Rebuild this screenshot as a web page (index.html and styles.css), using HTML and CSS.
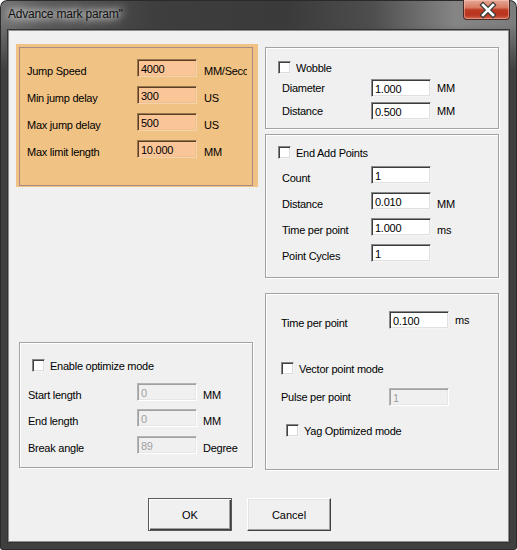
FILE: index.html
```html
<!DOCTYPE html>
<html>
<head>
  <title>Advance mark param</title>
  <link rel="stylesheet" href="styles.css">
</head>
<body>
  <div class="window">
    <div class="titlebar">
      <span class="title">Advance mark param"</span>
      <span class="close">
        <svg width="47" height="20" viewBox="0 0 47 20">
          <path d="M19 5 L29 15 M29 5 L19 15" stroke="#3a3a3a" stroke-width="5" stroke-linecap="square"/>
          <path d="M19 5 L29 15 M29 5 L19 15" stroke="#ffffff" stroke-width="2.6" stroke-linecap="square"/>
        </svg>
      </span>
    </div>

    <div class="client">
      <div class="columns">
        <div class="col-left">
          <div class="orange-panel">
            <div class="group group-orange">
              <div class="row">
                <span class="label shift">Jump Speed</span>
                <input class="field field-orange" type="text" value="4000">
                <span class="unit shift unit-clip">MM/Second</span>
              </div>
              <div class="row">
                <span class="label shift">Min jump delay</span>
                <input class="field field-orange" type="text" value="300">
                <span class="unit shift">US</span>
              </div>
              <div class="row">
                <span class="label shift">Max jump delay</span>
                <input class="field field-orange" type="text" value="500">
                <span class="unit shift">US</span>
              </div>
              <div class="row">
                <span class="label shift">Max limit length</span>
                <input class="field field-orange" type="text" value="10.000">
                <span class="unit shift">MM</span>
              </div>
            </div>
          </div>

          <div class="group group-optimize">
            <label class="check-row"><input type="checkbox" class="check"> Enable optimize mode</label>
            <div class="row">
              <span class="label shift">Start length</span>
              <input class="field" type="text" value="0" disabled>
              <span class="unit shift">MM</span>
            </div>
            <div class="row">
              <span class="label shift">End length</span>
              <input class="field" type="text" value="0" disabled>
              <span class="unit shift">MM</span>
            </div>
            <div class="row row-last">
              <span class="label shift">Break angle</span>
              <input class="field" type="text" value="89" disabled>
              <span class="unit shift">Degree</span>
            </div>
          </div>
        </div>

        <div class="col-right">
          <div class="group group-wobble">
            <label class="check-row"><input type="checkbox" class="check"> Wobble</label>
            <div class="row">
              <span class="label">Diameter</span>
              <input class="field" type="text" value="1.000">
              <span class="unit">MM</span>
            </div>
            <div class="row">
              <span class="label">Distance</span>
              <input class="field" type="text" value="0.500">
              <span class="unit">MM</span>
            </div>
          </div>

          <div class="group group-endadd">
            <label class="check-row"><input type="checkbox" class="check"> End Add Points</label>
            <div class="row">
              <span class="label shift">Count</span>
              <input class="field" type="text" value="1">
            </div>
            <div class="row">
              <span class="label shift">Distance</span>
              <input class="field" type="text" value="0.010">
              <span class="unit shift">MM</span>
            </div>
            <div class="row">
              <span class="label shift">Time per point</span>
              <input class="field" type="text" value="1.000">
              <span class="unit shift">ms</span>
            </div>
            <div class="row">
              <span class="label shift">Point Cycles</span>
              <input class="field" type="text" value="1">
            </div>
          </div>

          <div class="group group-point">
            <div class="row">
              <span class="label shift">Time per point</span>
              <input class="field" type="text" value="0.100">
              <span class="unit">ms</span>
            </div>
            <label class="check-row check-vector"><input type="checkbox" class="check"> Vector point mode</label>
            <div class="row row-pulse">
              <span class="label">Pulse per point</span>
              <input class="field" type="text" value="1" disabled>
            </div>
            <label class="check-row check-yag"><input type="checkbox" class="check"> Yag Optimized mode</label>
          </div>
        </div>
      </div>

      <div class="buttons">
        <button class="btn btn-default">OK</button>
        <button class="btn">Cancel</button>
      </div>
    </div>
  </div>
</body>
</html>
```

FILE: styles.css
```css
body {
  margin: 0;
  font-family: "Liberation Sans", Arial, sans-serif;
  font-size: 11px;
  letter-spacing: -0.25px;
  color: #000;
}

.window {
  width: 517px;
  height: 550px;
  box-sizing: border-box;
  display: flex;
  flex-direction: column;
  border-radius: 7px 7px 3px 3px;
  background:
    linear-gradient(180deg, rgba(61,61,61,0) 0px, rgba(61,61,61,0) 24px, #3f3f3f 70px),
    linear-gradient(90deg, #747474 0%, #5a5a5a 8%, #3e3e3e 30%, #3a3a3a 55%, #4e4e4e 72%, #858585 88%, #7c7c7c 100%);
  box-shadow: inset 0 0 0 1px #2a2a2a;
}

.titlebar {
  height: 30px;
  display: flex;
  align-items: flex-start;
}

.title {
  margin: 7px 0 0 8px;
  font-size: 12px;
  letter-spacing: -0.2px;
  color: #111;
  text-shadow: 0 0 6px #e8e8e8, 0 0 10px #d0d0d0, 0 0 14px #c8c8c8;
}

.close {
  margin-left: auto;
  margin-right: 7px;
  width: 47px;
  height: 20px;
  box-sizing: border-box;
  border: 1px solid #4a2a26;
  border-top: none;
  border-radius: 0 0 4px 4px;
  background: linear-gradient(180deg, #e6a896 0%, #d77a62 40%, #bd3a22 52%, #b83420 78%, #d2664c 100%);
  box-shadow: inset 0 0 0 1px rgba(255,210,200,0.45);
}

.close svg {
  display: block;
}

.client {
  margin: 0 8px 8px;
  height: 512px;
  box-sizing: border-box;
  background: #f0f0f0;
  border: 1px solid #8e8e8e;
  box-shadow: 0 0 0 1px #333;
}

.columns {
  display: flex;
  gap: 7px;
  padding-left: 7px;
}

.col-left {
  width: 242px;
  margin-top: 13px;
}

.col-right {
  width: 234px;
  margin-top: 16px;
}

.orange-panel {
  width: 242px;
  height: 143px;
  background: #f0c284;
  overflow: hidden;
}

.group {
  box-sizing: border-box;
  display: flex;
  flex-direction: column;
  border: 1px solid #a3a3a3;
  box-shadow: inset 1px 1px 0 #fff, 1px 1px 0 #fff;
}

.group-orange {
  margin: 3px 0 0 3px;
  width: 234px;
  height: 139px;
  padding: 11px 0 0 7px;
  gap: 9px;
  border-color: #a88a82;
  box-shadow: none;
}

.group-optimize {
  margin: 155px 0 0 3px;
  width: 234px;
  height: 126px;
  padding: 16px 0 0 8px;
  gap: 8px;
}

.group-wobble {
  height: 82px;
  padding: 13px 0 0 16px;
  gap: 5px;
}

.group-endadd {
  margin-top: 5px;
  height: 144px;
  padding: 11px 0 0 16px;
  gap: 8px;
}

.group-point {
  margin-top: 15px;
  height: 177px;
  padding: 17px 0 0 15px;
}

.row {
  display: flex;
  align-items: center;
  height: 18px;
  white-space: nowrap;
}

.label {
  width: 89px;
  flex: none;
}

.group-orange .label {
  width: 110px;
}

.group-optimize .label {
  width: 109px;
}

.group-point .label {
  width: 108px;
}

.shift {
  padding-top: 5px;
}

.unit {
  margin-left: 6px;
}

.group-orange .unit {
  margin-left: 7px;
}

.unit-clip {
  width: 43px;
  overflow: hidden;
}

.field {
  width: 60px;
  height: 18px;
  box-sizing: border-box;
  margin: 0;
  padding: 1px 0 0 3px;
  font-family: "Liberation Sans", Arial, sans-serif;
  font-size: 11px;
  letter-spacing: -0.25px;
  color: #000;
  background: #fff;
  border: 1px solid;
  border-color: #8a8a8a #f4f4f4 #f4f4f4 #8a8a8a;
  box-shadow: inset 1px 1px 0 #3c3c3c, inset -1px -1px 0 #e0e0e0;
  outline: none;
}

.field-orange {
  background: #fac698;
  border-color: #9a7650 #f6d2aa #f6d2aa #9a7650;
  box-shadow: inset 1px 1px 0 #5c3e22, inset -1px -1px 0 #f0c08e;
}

.field:disabled {
  background: #f0f0f0;
  color: #a0a0a0;
  border-color: #b4b4b4 #fff #fff #b4b4b4;
  box-shadow: inset 1px 1px 0 #a0a0a0, inset -1px -1px 0 #e6e6e6;
}

.check-row {
  display: flex;
  align-items: center;
  gap: 5px;
  height: 13px;
  white-space: nowrap;
}

.group-wobble .check-row,
.group-endadd .check-row {
  margin-left: -4px;
}

.group-endadd .check-row {
  margin-bottom: -1px;
}

.group-optimize .check-row {
  margin-left: 4px;
  margin-bottom: 3px;
}

.check {
  appearance: none;
  -webkit-appearance: none;
  width: 13px;
  height: 13px;
  margin: 0;
  flex: none;
  background: #fff;
  border: 1px solid;
  border-color: #848484 #f4f4f4 #f4f4f4 #848484;
  box-shadow: inset 1px 1px 0 #404040, inset -1px -1px 0 #dcdcdc;
}

.check-vector {
  margin-top: 33px;
}

.row-pulse {
  margin-top: 13px;
}

.check-yag {
  margin: 18px 0 0 5px;
}

.row-last {
  margin-top: 1px;
}

.buttons {
  display: flex;
  gap: 15px;
  margin: 28px 0 0 139px;
}

.btn {
  width: 84px;
  height: 33px;
  margin: 0;
  padding: 0;
  font-family: "Liberation Sans", Arial, sans-serif;
  font-size: 11px;
  color: #000;
  background: #f0f0f0;
  border: 1px solid;
  border-color: #fff #404040 #404040 #fff;
  box-shadow: inset -1px -1px 0 #a0a0a0, inset 1px 1px 0 #e3e3e3;
}

.btn-default {
  border-color: #5a5a5a;
  box-shadow: inset 1px 1px 0 #fff, inset -1px -1px 0 #404040, inset -2px -2px 0 #a0a0a0;
}
```
